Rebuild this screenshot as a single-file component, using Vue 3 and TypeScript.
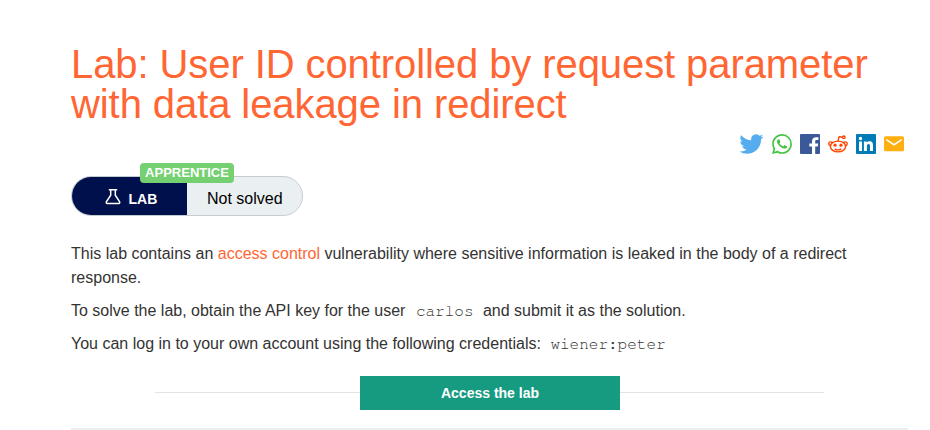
<script setup lang="ts">
interface Share {
  name: string
  box: string
  color: string
  path: string
  wide?: boolean
}

const shares: Share[] = [
  {
    name: 'twitter',
    box: '0 2 24 20',
    color: '#55acee',
    wide: true,
    path: 'M23.95 4.57a10 10 0 0 1-2.82.77 4.96 4.96 0 0 0 2.16-2.72c-.95.55-2 .95-3.13 1.18a4.92 4.92 0 0 0-8.38 4.48C7.69 8.1 4.07 6.13 1.64 3.16a4.92 4.92 0 0 0 1.52 6.57 4.9 4.9 0 0 1-2.23-.61v.06a4.92 4.92 0 0 0 3.95 4.83 5 5 0 0 1-2.21.08 4.94 4.94 0 0 0 4.6 3.42A9.87 9.87 0 0 1 0 19.54a13.99 13.99 0 0 0 7.55 2.21c9.05 0 14-7.5 14-13.98 0-.21 0-.42-.02-.63a9.94 9.94 0 0 0 2.42-2.57z',
  },
  {
    name: 'whatsapp',
    box: '0 0 24 24',
    color: '#43c544',
    path: 'M17.47 14.38c-.3-.15-1.76-.87-2.03-.97-.27-.1-.47-.15-.67.15-.2.3-.77.97-.94 1.16-.17.2-.35.22-.64.08-.3-.15-1.26-.46-2.39-1.48-.88-.79-1.48-1.76-1.65-2.06-.17-.3-.02-.46.13-.6.13-.14.3-.35.44-.53.15-.17.2-.3.3-.5.1-.2.05-.37-.02-.52-.08-.15-.67-1.61-.92-2.2-.24-.6-.49-.51-.67-.52h-.57c-.2 0-.52.07-.79.37-.27.3-1.04 1.02-1.04 2.48s1.07 2.87 1.21 3.07c.15.2 2.1 3.2 5.08 4.49.71.3 1.26.49 1.69.62.71.23 1.36.2 1.87.12.57-.09 1.76-.72 2-1.41.25-.7.25-1.29.18-1.42-.07-.12-.27-.2-.57-.34M12.05 21.79a9.87 9.87 0 0 1-5.03-1.38l-.36-.22-3.74.98 1-3.65-.24-.37a9.86 9.86 0 0 1-1.51-5.26c0-5.45 4.44-9.88 9.89-9.88a9.88 9.88 0 0 1 9.88 9.89c0 5.45-4.44 9.89-9.89 9.89M20.46 3.49A11.82 11.82 0 0 0 12.05 0C5.5 0 .16 5.34.16 11.89c0 2.1.55 4.14 1.59 5.95L.06 24l6.3-1.65a11.88 11.88 0 0 0 5.69 1.45c6.55 0 11.89-5.34 11.89-11.9a11.82 11.82 0 0 0-3.48-8.41z',
  },
  {
    name: 'facebook',
    box: '0 0 20 20',
    color: '#3b5998',
    path: 'M1 0H19Q20 0 20 1V19Q20 20 19 20H15.2V12.6H17.8L18.2 9.5H15.2V7.6C15.2 6.7 15.5 6.1 16.7 6.1H18.4V3.3C18 3.2 17.1 3.2 16.1 3.2C13.7 3.2 12 4.6 12 7.2V9.5H9.3V12.6H12V20H1Q0 20 0 19V1Q0 0 1 0Z',
  },
  {
    name: 'reddit',
    box: '0 0 20 20',
    color: '#ff4500',
    path: '',
  },
  {
    name: 'linkedin',
    box: '0 0 20 20',
    color: '#007bb5',
    path: 'M1 0H19Q20 0 20 1V19Q20 20 19 20H1Q0 20 0 19V1Q0 0 1 0ZM3 7.5V17H6V7.5ZM4.5 2.8A1.7 1.7 0 1 0 4.5 6.2A1.7 1.7 0 1 0 4.5 2.8ZM7.9 7.5V17H10.9V12.3C10.9 11 11.3 10 12.6 10C13.9 10 14 11.2 14 12.4V17H17V11.8C17 9.2 16.4 7.3 13.5 7.3C12.1 7.3 11.2 8 10.8 8.8V7.5Z',
  },
  {
    name: 'email',
    box: '0 0 20 20',
    color: '#ffb010',
    path: 'M1.5 2.3H18.5Q20 2.3 20 3.8V15.7Q20 17.2 18.5 17.2H1.5Q0 17.2 0 15.7V3.8Q0 2.3 1.5 2.3ZM2.2 4.8V6.4L10 11.7L17.8 6.4V4.8L10 9.8Z',
  },
]
</script>

<template>
  <main class="page">
    <h1>Lab: User ID controlled by request parameter with data leakage in redirect</h1>

    <div class="shares">
      <a v-for="s in shares" :key="s.name" class="share" :class="{ wide: s.wide }">
        <svg v-if="s.path" :viewBox="s.box" :fill="s.color" fill-rule="evenodd">
          <path :d="s.path" />
        </svg>
        <svg v-else :viewBox="s.box" fill="none" :stroke="s.color" stroke-width="1.4">
          <ellipse cx="10" cy="12.5" rx="7.6" ry="5.4" />
          <path d="M10 7.1L10.8 3.5Q11.1 2.5 12.2 2.8L14.4 3.3M2.4 11.8C.2 11.4 .2 8.2 2.3 7.9C3.4 7.8 4.2 8.2 4.6 8.9M17.6 11.8C19.8 11.4 19.8 8.2 17.7 7.9C16.6 7.8 15.8 8.2 15.4 8.9M6.8 14.8Q10 16.9 13.2 14.8" />
          <circle cx="15.8" cy="3.3" r="1.3" />
          <circle class="eye" cx="7" cy="11.2" r="1.6" />
          <circle class="eye" cx="13" cy="11.2" r="1.6" />
        </svg>
      </a>
    </div>

    <div class="status">
      <div class="pill">
        <div class="kind">
          <svg viewBox="0 0 16 18" fill="none" stroke="#fff" stroke-width="1.5">
            <path d="M3.8 2.8H12.2M5.7 2.8V8.2L1.5 14.6Q.7 16.5 2.4 16.5H13.6Q15.3 16.5 14.5 14.6L10.3 8.2V2.8" />
          </svg>
          <span>LAB</span>
        </div>
        <div class="state">Not solved</div>
      </div>
      <span class="level">APPRENTICE</span>
    </div>

    <div class="text">
      <p>This lab contains an <a>access control</a> vulnerability where sensitive information is leaked in the body of a redirect response.</p>
      <p>To solve the lab, obtain the API key for the user <code class="user">carlos</code> and submit it as the solution.</p>
      <p>You can log in to your own account using the following credentials: <code>wiener:peter</code></p>
    </div>

    <div class="launch">
      <span class="rule"></span>
      <button type="button">Access the lab</button>
      <span class="rule"></span>
    </div>
    <hr>
  </main>
</template>

<style>
body {
  background: #fff;
  overflow: hidden;
}
</style>

<style scoped>
.page {
  box-sizing: border-box;
  width: 930px;
  height: 430px;
  padding: 44px 22px 0 71px;
  overflow: hidden;
  font-family: "Liberation Sans", Arial, sans-serif;
  font-size: 16px;
  line-height: 24px;
  color: #333332;
}

h1 {
  margin: 0;
  font-size: 40px;
  font-weight: 400;
  line-height: 40px;
  letter-spacing: -0.085px;
  color: #ff6633;
}

.shares {
  display: flex;
  justify-content: flex-end;
  gap: 8px;
  height: 20px;
  margin-top: 10px;
  padding-right: 4px;
}

.share {
  width: 20px;
  height: 20px;
}

.share.wide {
  width: 25px;
}

.share svg {
  display: block;
  width: 100%;
  height: 100%;
}

.eye {
  fill: #ff4500;
  stroke: none;
}

.status {
  position: relative;
  width: 232px;
  margin-top: 22px;
}

.pill {
  box-sizing: border-box;
  display: flex;
  height: 40px;
  border: 1px solid #c5ccd0;
  border-radius: 20px;
  background: #eaeff2;
  overflow: hidden;
}

.kind {
  box-sizing: border-box;
  display: flex;
  gap: 7.5px;
  width: 115px;
  padding: 10px 0 0 33px;
  background: #00104d;
  color: #fff;
  font-size: 14px;
  font-weight: 700;
}

.kind svg {
  width: 16px;
  height: 18px;
}

.state {
  padding: 10px 0 0 20px;
  color: #000;
}

.level {
  position: absolute;
  left: 69px;
  top: -13px;
  width: 94px;
  border-radius: 4px;
  background: #74d071;
  color: #fff;
  font-size: 13px;
  font-weight: 700;
  line-height: 20px;
  text-align: center;
}

.text {
  margin-top: 26px;
}

p {
  margin: 0 0 9px;
}

p a {
  color: #ff6633;
}

code {
  padding: 0 5px;
  font-family: "Nimbus Mono PS", FreeMono, "Liberation Mono", "Courier New", monospace;
  font-size: 16px;
  line-height: 1;
}

code.user {
  padding-left: 6px;
}

.launch {
  display: flex;
  align-items: flex-start;
  width: 669px;
  margin: 20px 0 0 84px;
}

.rule {
  flex: 0 0 205px;
  height: 1px;
  margin-top: 16px;
  background: #e3e4e5;
}

.rule:last-child {
  flex-basis: 204px;
}

button {
  width: 260px;
  height: 34px;
  padding: 0;
  border: 0;
  background: #179b80;
  color: #fff;
  font: 700 14px/34px "Liberation Sans", Arial, sans-serif;
}

hr {
  height: 2px;
  margin: 18px 0 0;
  border: 0;
  background: #eaeff2;
}
</style>
